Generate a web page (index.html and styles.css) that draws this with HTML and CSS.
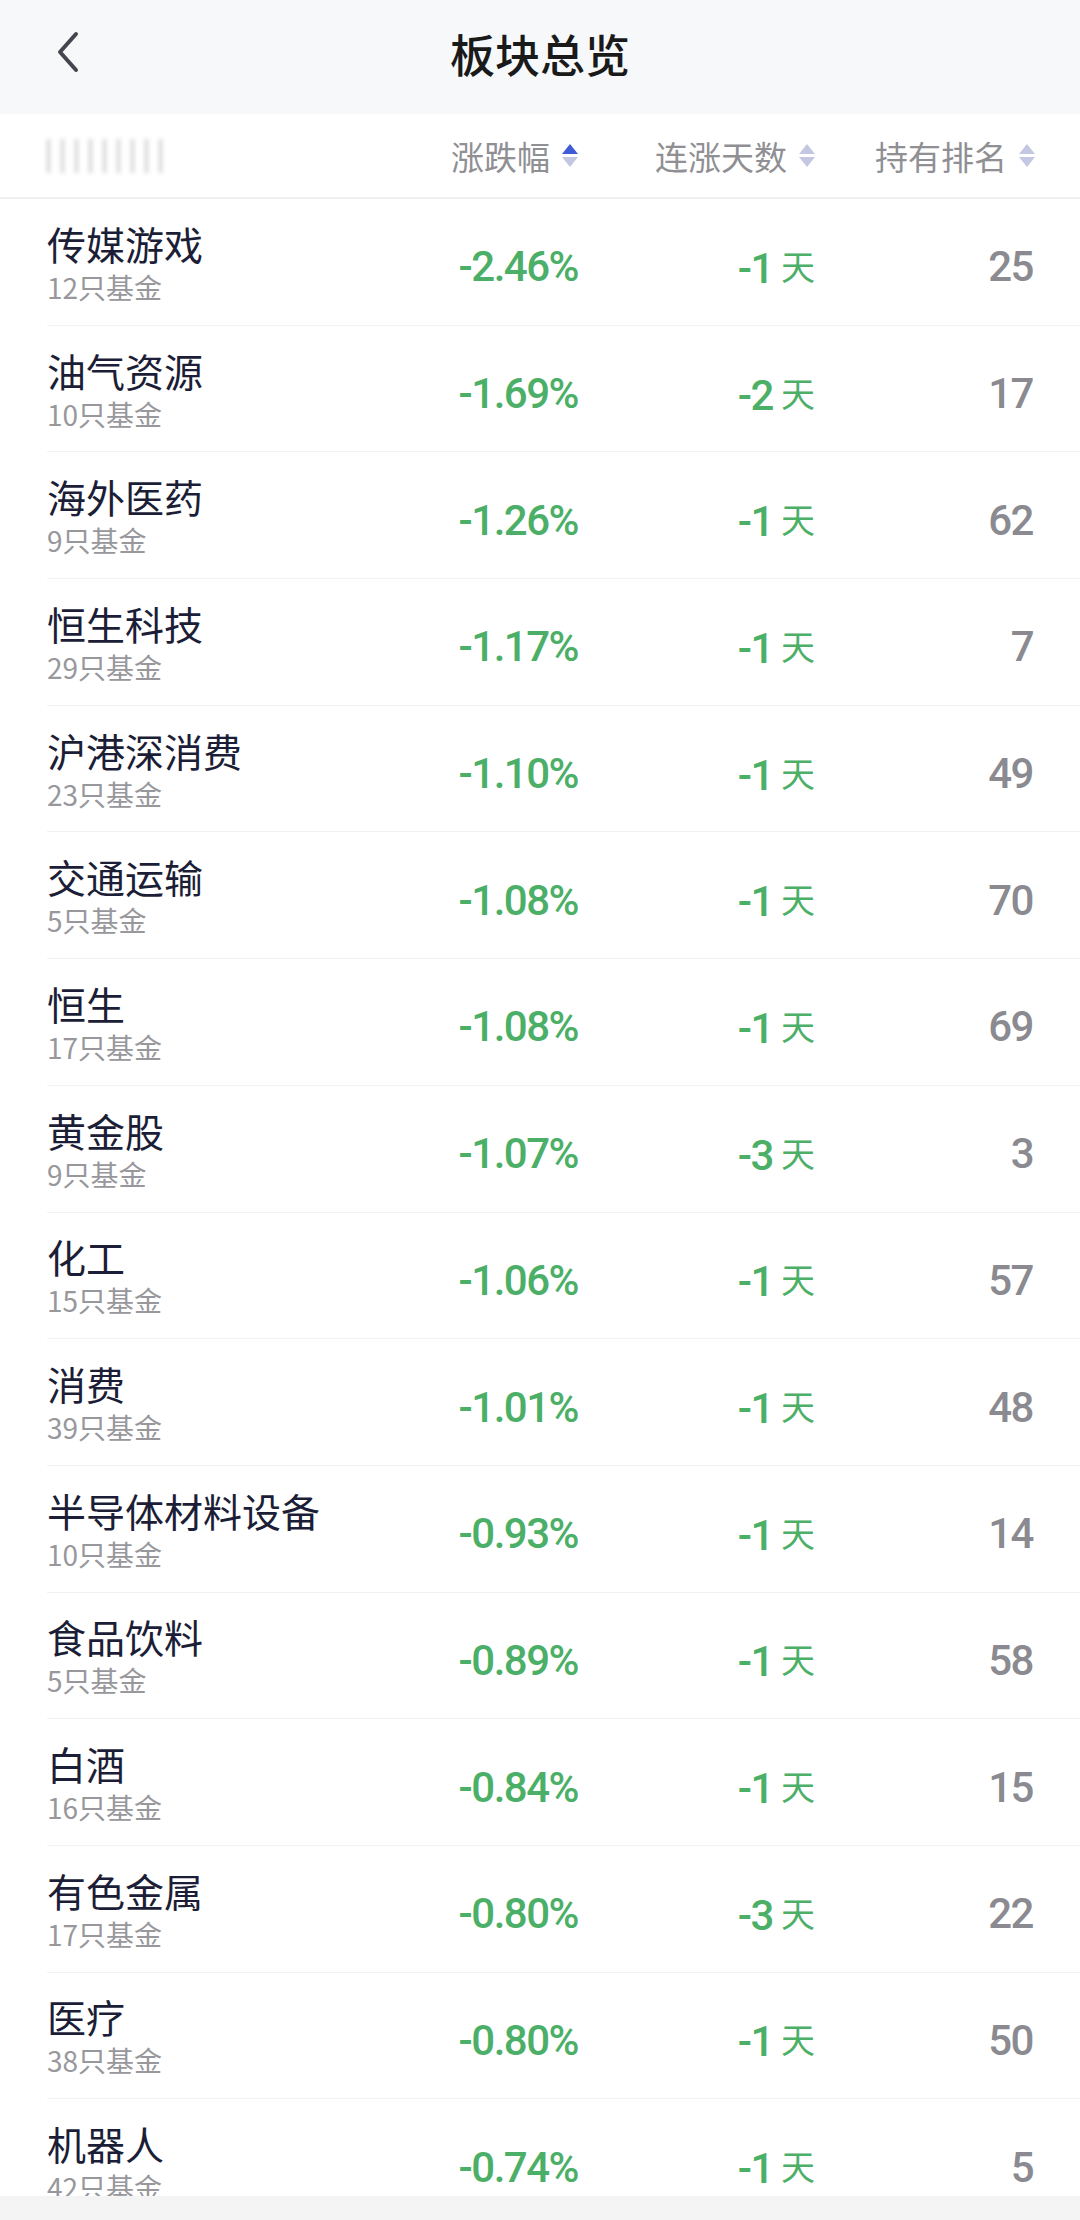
FILE: index.html
```html
<!DOCTYPE html>
<html lang="zh-CN">
<head>
    <meta charset="UTF-8">
    <meta name="viewport" content="width=device-width, initial-scale=1.0">
    <title>板块总览</title>
    <link rel="stylesheet" href="styles.css">
</head>
<body>
<div class="page">
    <header class="top-bar">
        <svg class="back" width="30" height="44" viewBox="0 0 30 44">
            <polyline points="22,4 6,22 22,40" fill="none" stroke="#44454f" stroke-width="4" stroke-linecap="round" stroke-linejoin="round"/>
        </svg>
        <h1 class="title">板块总览</h1>
    </header>

    <div class="col-head">
        <span class="blurred"></span>
        <span class="sort">涨跌幅<i class="arrows"><b class="up active"></b><b class="down"></b></i></span>
        <span class="sort">连涨天数<i class="arrows"><b class="up"></b><b class="down"></b></i></span>
        <span class="sort">持有排名<i class="arrows"><b class="up"></b><b class="down"></b></i></span>
    </div>

    <div class="list" id="list"></div>

    <div class="bottom-bar"></div>
</div>

<script>
    const rows = [
        ["传媒游戏", 12, "-2.46%", "-1", 25],
        ["油气资源", 10, "-1.69%", "-2", 17],
        ["海外医药", 9, "-1.26%", "-1", 62],
        ["恒生科技", 29, "-1.17%", "-1", 7],
        ["沪港深消费", 23, "-1.10%", "-1", 49],
        ["交通运输", 5, "-1.08%", "-1", 70],
        ["恒生", 17, "-1.08%", "-1", 69],
        ["黄金股", 9, "-1.07%", "-3", 3],
        ["化工", 15, "-1.06%", "-1", 57],
        ["消费", 39, "-1.01%", "-1", 48],
        ["半导体材料设备", 10, "-0.93%", "-1", 14],
        ["食品饮料", 5, "-0.89%", "-1", 58],
        ["白酒", 16, "-0.84%", "-1", 15],
        ["有色金属", 17, "-0.80%", "-3", 22],
        ["医疗", 38, "-0.80%", "-1", 50],
        ["机器人", 42, "-0.74%", "-1", 5]
    ];

    const list = document.getElementById('list');
    rows.forEach(r => {
        const row = document.createElement('div');
        row.className = 'row';
        row.innerHTML =
            '<div class="name"><div class="sector">' + r[0] + '</div>' +
            '<div class="count">' + r[1] + '只基金</div></div>' +
            '<div class="pct">' + r[2] + '</div>' +
            '<div class="days">' + r[3] + '<span class="day-unit">天</span></div>' +
            '<div class="rank">' + r[4] + '</div>';
        list.appendChild(row);
    });
</script>
</body>
</html>
```

FILE: styles.css
```css
body {
    margin: 0;
    background-color: #fff;
    font-family: "Noto Sans CJK SC", "Noto Sans", sans-serif;
}

.page {
    height: 2220px;
    display: flex;
    flex-direction: column;
    overflow: hidden;
}

.top-bar {
    height: 114px;
    flex-shrink: 0;
    box-sizing: border-box;
    padding-bottom: 8px;
    background-color: #f7f8fa;
    display: flex;
    align-items: center;
    justify-content: center;
    position: relative;
}

.back {
    position: absolute;
    left: 54px;
    top: 30px;
}

.title {
    margin: 0;
    font-size: 45px;
    font-weight: 500;
    color: #1a1a1a;
}

.col-head {
    height: 85px;
    flex-shrink: 0;
    box-sizing: border-box;
    border-bottom: 2px solid #f0f0f2;
    padding: 0 45px 0 47px;
    display: grid;
    grid-template-columns: 1fr 260px 237px 220px;
    align-items: center;
}

.blurred {
    width: 126px;
    height: 34px;
    background: repeating-linear-gradient(90deg, #c4c4c8 0 3px, transparent 3px 14px);
    filter: blur(2px);
    opacity: 0.8;
}

.sort {
    display: flex;
    align-items: center;
    justify-content: flex-end;
    font-size: 33px;
    color: #8f8f94;
}

.arrows {
    display: flex;
    flex-direction: column;
    gap: 3px;
    margin-left: 12px;
}

.arrows b {
    width: 0;
    height: 0;
    border-left: 8px solid transparent;
    border-right: 8px solid transparent;
}

.arrows .up {
    border-bottom: 10px solid #c4c7e2;
}

.arrows .down {
    border-top: 10px solid #c4c7e2;
}

.arrows .up.active {
    border-bottom-color: #3f5bd5;
}

.list {
    flex: 1;
    overflow: hidden;
}

.row {
    height: 126.7px;
    box-sizing: border-box;
    margin-left: 47px;
    padding-right: 47px;
    border-bottom: 1px solid #f2f2f4;
    display: grid;
    grid-template-columns: 1fr 200px 237px 218px;
    align-items: center;
}

.name {
    white-space: nowrap;
    margin-top: -2px;
}

.sector {
    font-size: 39px;
    line-height: 56px;
    color: #1b1e36;
}

.count {
    font-size: 28px;
    line-height: 40px;
    margin-top: -4px;
    color: #97979c;
}

.pct,
.days,
.rank {
    text-align: right;
    font-family: Roboto, "Noto Sans CJK SC", sans-serif;
    font-size: 42px;
    font-weight: 500;
    letter-spacing: -1.5px;
    padding-top: 10px;
}

.pct,
.days {
    color: #4caf68;
}

.day-unit {
    font-family: "Noto Sans CJK SC", sans-serif;
    font-size: 34px;
    font-weight: 400;
    letter-spacing: 0;
    margin-left: 8px;
    vertical-align: 3px;
}

.rank {
    color: #8a8a90;
}

.bottom-bar {
    height: 24px;
    flex-shrink: 0;
    background-color: #f4f4f5;
}
```
